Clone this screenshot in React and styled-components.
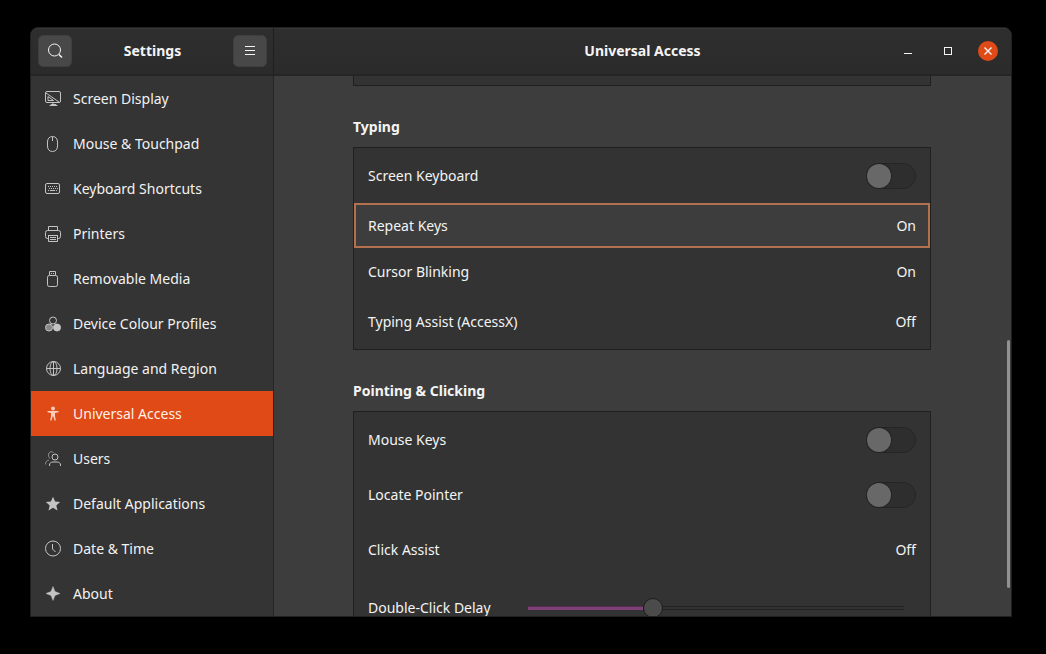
import React from "react";
import styled, { createGlobalStyle, css } from "styled-components";

const GlobalStyle = createGlobalStyle`
  *, *::before, *::after { box-sizing: border-box; }
  body {
    margin: 0;
    background: #000;
    color: #f4f4f4;
    font: 14px/20px "Noto Sans", "Open Sans", sans-serif;
  }
  button, input { font: inherit; color: inherit; }
`;

const Desktop = styled.div`
  height: 100vh;
  padding: 27px 34px 37px 30px;
  display: flex;
`;

const Window = styled.div`
  position: relative;
  flex: 1;
  min-width: 0;
  display: grid;
  grid-template-columns: 243px minmax(0, 1fr);
  grid-template-rows: 48px minmax(0, 1fr);
  overflow: hidden;
  border: 1px solid #202020;
  border-radius: 8px 8px 0 0;
  background: #3d3d3d;
`;

const headerBar = css`
  display: flex;
  align-items: center;
  background: linear-gradient(#2e2e2e, #2b2b2b);
  border-bottom: 2px solid #252525;
  box-shadow: inset 0 1px #363636;
`;

const SidebarHeader = styled.header`
  ${headerBar}
  justify-content: space-between;
  padding: 0 6px 0 7px;
  border-right: 1px solid #1f1f1f;
`;

const MainHeader = styled.header`
  ${headerBar}
  display: grid;
  grid-template-columns: 1fr auto 1fr;
  padding: 0 3px;
`;

const Title = styled.h1`
  margin: 0;
  font-size: 14px;
  line-height: 20px;
  font-weight: 700;
  grid-column: 2;
`;

const ToolButton = styled.button`
  width: 34px;
  height: 32px;
  padding: 0;
  display: grid;
  place-items: center;
  border: 1px solid #3f3f3f;
  border-radius: 5px;
  background: #484848;
`;

const WindowControls = styled.div`
  display: flex;
  justify-content: flex-end;
`;

const ControlButton = styled.button`
  width: 40px;
  height: 40px;
  padding: 0;
  border: 0;
  background: none;
  display: grid;
  place-items: center;
`;

const Sidebar = styled.nav`
  background: #343434;
  border-right: 1px solid #262626;
  overflow: hidden;
`;

const NavList = styled.ul`
  margin: 0;
  padding: 0;
  list-style: none;
`;

const NavLink = styled.a`
  display: flex;
  align-items: center;
  gap: 12px;
  height: 45px;
  padding: 0 14px;
  color: ${(p) => (p.$active ? "#fff0e8" : "#f2f2f2")};
  background: ${(p) => (p.$active ? "#df4a16" : "transparent")};
  text-decoration: none;
  white-space: nowrap;

  svg { color: ${(p) => (p.$active ? "#fbcdb9" : "#c4c4c4")}; }
`;

const Icon = styled.svg.attrs({ viewBox: "0 0 16 16", "aria-hidden": true })`
  width: 16px;
  height: 16px;
  flex: none;
  overflow: visible;
  fill: none;
  stroke: currentColor;
  stroke-width: 1;
`;

const Content = styled.main`
  overflow: hidden;
  display: flex;
  flex-direction: column;
  align-items: center;
  gap: 31px;
  padding: 0 25px 0 24px;
  background: #3d3d3d;

  > * { flex: none; width: 100%; max-width: 578px; }
`;

const Card = styled.div`
  background: #333;
  border: 1px solid #202020;
`;

const CardEnd = styled(Card)`
  height: 10px;
  border-top: 0;
`;

const Heading = styled.h2`
  margin: 0 0 10px;
  font-size: 14px;
  line-height: 20px;
  font-weight: 700;
`;

const rowLayout = css`
  display: flex;
  align-items: center;
  justify-content: space-between;
  width: 100%;
  height: ${(p) => p.$height || 55}px;
  padding: 0 14px;
`;

const Row = styled.label`
  ${rowLayout}
`;

const RowButton = styled.button`
  ${rowLayout}
  border: 0;
  text-align: left;
  background: ${(p) => (p.$focused ? "#3d3d3d" : "transparent")};
  outline: ${(p) => (p.$focused ? "2px solid #b4714f" : "none")};
  outline-offset: -2px;
`;

const Switch = styled.input.attrs({ type: "checkbox", role: "switch" })`
  appearance: none;
  margin: 0;
  width: 50px;
  height: 26px;
  border: 1px solid #252525;
  border-radius: 13px;
  background: #2e2e2e;
  display: flex;
  align-items: center;

  &::before {
    content: "";
    width: 24px;
    height: 24px;
    border-radius: 50%;
    background: #686868;
    box-shadow: 0 0 0 1px #242424;
  }
  &:checked { justify-content: flex-end; background: #804078; }
`;

const Slider = styled.input.attrs({ type: "range" })`
  appearance: none;
  margin: 0 12px 0 0;
  width: 376px;
  height: 20px;
  background: none;

  &::-webkit-slider-runnable-track {
    height: 4px;
    background:
      linear-gradient(#552b50 1px, #804078 1px) 0 0 / 115px 100% no-repeat,
      linear-gradient(#222 1px, #333 1px, #333 3px, #222 3px);
  }
  &::-webkit-slider-thumb {
    appearance: none;
    width: 20px;
    height: 20px;
    margin-top: -8px;
    border: 1px solid #1c1c1c;
    border-radius: 50%;
    background: #4b4b4b;
  }
`;

const ScrollThumb = styled.div`
  position: absolute;
  right: 1px;
  bottom: 28px;
  width: 3px;
  height: 248px;
  border-radius: 2px;
  background: #929292;
`;

const icons = {
  display: (
    <>
      <rect x=".5" y=".5" width="15" height="11" rx="1.5" />
      <path d="M1 2l13 9M3 5.500v4h5.500zM8 11.500v2" />
      <path d="M4 15h9l-2.500-2h-4z" fill="currentColor" stroke="none" />
    </>
  ),
  mouse: (
    <>
      <path d="M7.500 .5C4 .5 2.500 3 2.500 6v4C2.500 13 4 15.500 7.500 15.500S12.500 13 12.500 10V6C12.500 3 11 .5 7.500 .5z" />
      <path d="M7.500 1v4" />
    </>
  ),
  keyboard: (
    <>
      <rect x=".5" y="2.500" width="14" height="10" rx="1.500" />
      <path d="M3 5.500h10M4 7.500h9" strokeDasharray="1 1" />
      <path d="M3 9.500h1M5 9.500h5M11 9.500h1" />
    </>
  ),
  printer: (
    <>
      <path d="M3.500 4V.5h9V4M3 12.500H2.500a2 2 0 0 1-2-2v-4a2 2 0 0 1 2-2h11a2 2 0 0 1 2 2v4a2 2 0 0 1-2 2H13" />
      <path d="M3 9.500h10M3.500 9.500v6h9v-6M5 11.500h6M5 13.500h6" />
    </>
  ),
  media: (
    <>
      <path d="M4.500 4V.5h6V4M6 2.500h1M8 2.500h1" />
      <rect x="2.500" y="4.500" width="10" height="11" rx="1.800" />
    </>
  ),
  colour: (
    <>
      <circle cx="8" cy="4.500" r="3.500" />
      <circle cx="4" cy="11.500" r="3.500" fill="#868686" />
      <circle cx="12" cy="11.500" r="3.500" fill="currentColor" />
    </>
  ),
  globe: (
    <>
      <circle cx="8.500" cy="7.500" r="7" />
      <ellipse cx="8.500" cy="7.500" rx="3.500" ry="7" />
      <path d="M1.500 7.500h14M8.500.5v14" />
    </>
  ),
  access: (
    <g fill="currentColor" stroke="none">
      <circle cx="8" cy="2.500" r="2" />
      <path d="M2.500 5h11v1.200l-3.500.8v3l.8 4.500H9.400L8.400 10.500h-.8L6.600 14.500H5.200L6 10V7l-3.500-.8z" />
    </g>
  ),
  users: (
    <>
      <g opacity=".6">
        <path d="M8.500 1.500A3 3 0 0 0 3.500 4c0 1.500.6 2.600 1.500 3.500M.5 13.500c0-2.500 1-4 3.500-4.500" />
      </g>
      <circle cx="10" cy="6" r="3" />
      <path d="M4.500 15v-1c0-2 1.500-3 3.500-3h4c2 0 3.500 1 3.500 3v1" />
    </>
  ),
  star: (
    <path
      d="M8 .8l2.100 4.700 5 .5-3.800 3.400 1.200 5.100L8 11.800l-4.500 2.700 1.200-5.100L.9 6l5-.5z"
      fill="currentColor"
      stroke="none"
    />
  ),
  clock: (
    <>
      <circle cx="8" cy="7.500" r="7.500" />
      <path d="M7.500 3v5l3 3" />
    </>
  ),
  about: (
    <path
      d="M8 .5l2 5 5 2-5 2-2 5-2-5-5-2 5-2z"
      fill="currentColor"
      stroke="currentColor"
      strokeWidth=".4"
    />
  ),
};

const navItems = [
  ["Screen Display", "display"],
  ["Mouse & Touchpad", "mouse"],
  ["Keyboard Shortcuts", "keyboard"],
  ["Printers", "printer"],
  ["Removable Media", "media"],
  ["Device Colour Profiles", "colour"],
  ["Language and Region", "globe"],
  ["Universal Access", "access"],
  ["Users", "users"],
  ["Default Applications", "star"],
  ["Date & Time", "clock"],
  ["About", "about"],
];

function SwitchRow({ label }) {
  return (
    <Row>
      <span>{label}</span>
      <Switch />
    </Row>
  );
}

function ValueRow({ label, value, height, focused }) {
  return (
    <RowButton type="button" $height={height} $focused={focused}>
      <span>{label}</span>
      <span>{value}</span>
    </RowButton>
  );
}

export default function App() {
  return (
    <>
      <GlobalStyle />
      <Desktop>
        <Window>
          <SidebarHeader>
            <ToolButton type="button" aria-label="Search">
              <Icon>
                <circle cx="7.500" cy="7" r="6" />
                <path d="M12 11.500l3 3" strokeWidth="1.500" />
              </Icon>
            </ToolButton>
            <Title>Settings</Title>
            <ToolButton type="button" aria-label="Menu">
              <Icon>
                <path d="M3 3.500h10M3 7.500h10M3 11.500h10" />
              </Icon>
            </ToolButton>
          </SidebarHeader>
          <MainHeader>
            <Title as="h2">Universal Access</Title>
            <WindowControls>
              <ControlButton type="button" aria-label="Minimise">
                <Icon>
                  <path d="M4 10.500h8" />
                </Icon>
              </ControlButton>
              <ControlButton type="button" aria-label="Maximise">
                <Icon>
                  <rect x="4.500" y="4.500" width="7" height="7" />
                </Icon>
              </ControlButton>
              <ControlButton type="button" aria-label="Close">
                <Icon>
                  <circle cx="8" cy="8" r="10" fill="#df4a16" stroke="none" />
                  <path d="M4.500 4.500l7 7M11.500 4.500l-7 7" strokeWidth="1.400" />
                </Icon>
              </ControlButton>
            </WindowControls>
          </MainHeader>
          <Sidebar aria-label="Settings panels">
            <NavList>
              {navItems.map(([label, icon]) => {
                const active = label === "Universal Access";
                return (
                  <li key={label}>
                    <NavLink href="#" $active={active} aria-current={active ? "page" : undefined}>
                      <Icon>{icons[icon]}</Icon>
                      {label}
                    </NavLink>
                  </li>
                );
              })}
            </NavList>
          </Sidebar>
          <Content>
            <CardEnd />
            <section>
              <Heading>Typing</Heading>
              <Card>
                <SwitchRow label="Screen Keyboard" />
                <ValueRow label="Repeat Keys" value="On" height={45} focused />
                <ValueRow label="Cursor Blinking" value="On" height={47} />
                <ValueRow label="Typing Assist (AccessX)" value="Off" height={54} />
              </Card>
            </section>
            <section>
              <Heading>Pointing &amp; Clicking</Heading>
              <Card>
                <SwitchRow label="Mouse Keys" />
                <SwitchRow label="Locate Pointer" />
                <ValueRow label="Click Assist" value="Off" />
                <Row $height={61}>
                  <span>Double-Click Delay</span>
                  <Slider min="0" max="1000" defaultValue="323" />
                </Row>
              </Card>
            </section>
          </Content>
          <ScrollThumb />
        </Window>
      </Desktop>
    </>
  );
}
